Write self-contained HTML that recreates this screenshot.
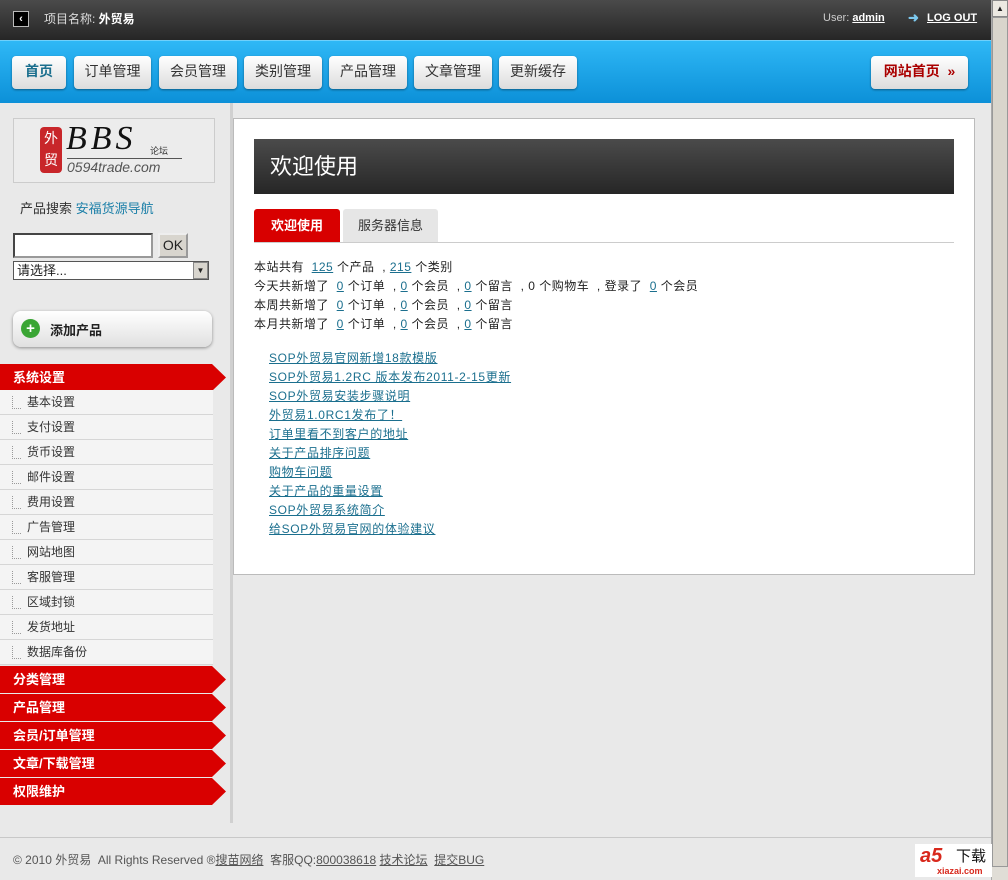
<!DOCTYPE html>
<html><head><meta charset="utf-8"><style>
*{margin:0;padding:0;box-sizing:border-box}
body{width:1008px;height:880px;overflow:hidden;background:#e9e9e9;font-family:"Liberation Sans","Noto Sans CJK SC",sans-serif;font-size:12px;color:#222;position:relative}
.abs{position:absolute}
#top{left:0;top:0;width:992px;height:40px;background:linear-gradient(#4a4a4a,#262626)}
#nav{left:0;top:40px;width:992px;height:63px;background:linear-gradient(#2fb8f6,#0c90d8);border-top:1px solid #6fd0fb}
.btn{position:absolute;top:15px;height:33px;background:linear-gradient(#fff,#dcdcdc);border-radius:4px;box-shadow:0 1px 2px rgba(0,0,0,.4);font-size:14px;line-height:31px;text-align:center;color:#333}
.side-item{position:absolute;left:0;width:213px;height:25px;background:#f4f4f4;border-bottom:1px solid #d6d6d6;line-height:24px;padding-left:27px;font-size:12px;color:#333}
.side-item:before{content:"";position:absolute;left:12px;top:6px;width:8px;height:12px;border-left:1px dotted #999;border-bottom:1px dotted #999}
.red{position:absolute;left:0;width:226px;height:27px;background:#d90000;clip-path:polygon(0 0,212px 0,226px 50%,212px 100%,0 100%);color:#fff;font-weight:bold;font-size:13px;line-height:27px;padding-left:13px}
a{color:#1b6f8e;text-decoration:underline}
.stats{left:254px;top:258px;line-height:19px;font-size:12px;letter-spacing:0.5px;white-space:nowrap}
.links{left:269px;top:349px;line-height:19px;font-size:12px;letter-spacing:0.65px;white-space:nowrap}
.links a{display:block}
</style></head><body>
<div id="top" class="abs">
 <div class="abs" style="left:13px;top:11px;width:16px;height:16px;background:#000;border:1px solid #bbb;color:#fff;font-size:11px;line-height:14px;text-align:center;font-weight:bold">‹</div>
 <div class="abs" style="left:44px;top:10px;color:#ddd;font-size:12px">项目名称: <b style="color:#fff">外贸易</b></div>
 <div class="abs" style="left:823px;top:12px;color:#ccc;font-size:11px">User: <b style="color:#fff;text-decoration:underline">admin</b></div>
 <div class="abs" style="left:908px;top:10px;color:#7cc8ee;font-size:13px;font-weight:bold">➜</div>
 <div class="abs" style="left:927px;top:12px;color:#fff;font-size:11px;font-weight:bold;text-decoration:underline">LOG OUT</div>
</div>
<div id="nav" class="abs">
 <div class="btn" style="left:12px;width:54px;color:#1b6f8e;font-weight:bold">首页</div>
 <div class="btn" style="left:74px;width:77px">订单管理</div>
 <div class="btn" style="left:159px;width:78px">会员管理</div>
 <div class="btn" style="left:244px;width:78px">类别管理</div>
 <div class="btn" style="left:329px;width:78px">产品管理</div>
 <div class="btn" style="left:414px;width:78px">文章管理</div>
 <div class="btn" style="left:499px;width:78px">更新缓存</div>
 <div class="btn" style="left:871px;width:97px;color:#a00;font-weight:bold">网站首页 &nbsp;»</div>
</div>
<div class="abs" style="left:991px;top:0;width:17px;height:880px;background:#e0ddd6;border-left:1px solid #aaa"></div>
<div class="abs" style="left:992px;top:0;width:16px;height:17px;background:#ece9e2;border:1px solid #888;font-size:8px;text-align:center;line-height:15px">▲</div>
<div class="abs" style="left:992px;top:17px;width:16px;height:850px;background:#d9d5cc;border:1px solid #999"></div>
<div class="abs" style="left:13px;top:118px;width:202px;height:65px;background:#ececec;border:1px solid #ccc"></div>
<div class="abs" style="left:40px;top:127px;width:22px;height:46px;background:#c8262a;border-radius:4px;color:#fff;font-size:14px;line-height:22px;text-align:center">外贸</div>
<div class="abs" style="left:66px;top:120px;font-family:'Liberation Serif',serif;font-style:italic;font-size:34px;letter-spacing:4px;color:#111">BBS</div>
<div class="abs" style="left:150px;top:144px;font-size:9px;color:#333">论坛</div>
<div class="abs" style="left:67px;top:158px;font-style:italic;font-size:14px;color:#555;border-top:1px solid #555;width:115px">0594trade.com</div>
<div class="abs" style="left:20px;top:198px;font-size:13px;color:#333">产品搜索 <span style="color:#1b7fa8">安福货源导航</span></div>
<div class="abs" style="left:13px;top:233px;width:140px;height:25px;background:#fff;border:2px inset #999"></div>
<div class="abs" style="left:158px;top:233px;width:30px;height:25px;background:#d8d5ce;border:2px outset #eee;font-size:14px;text-align:center;line-height:21px">OK</div>
<div class="abs" style="left:13px;top:261px;width:196px;height:19px;background:#fff;border:1px solid #555;font-size:13px;line-height:17px;padding-left:3px">请选择...</div>
<div class="abs" style="left:193px;top:262px;width:15px;height:17px;background:#d8d5ce;border:1px solid #888;font-size:8px;text-align:center;line-height:15px">▼</div>
<div class="abs" style="left:13px;top:311px;width:199px;height:36px;background:linear-gradient(#fff,#e0e0e0);border-radius:8px;box-shadow:0 1px 3px rgba(0,0,0,.4)"></div>
<div class="abs" style="left:21px;top:319px;width:19px;height:19px;border-radius:50%;background:#3aa534;color:#fff;font-weight:bold;text-align:center;line-height:19px;font-size:15px">+</div>
<div class="abs" style="left:50px;top:320px;font-weight:bold;font-size:13px">添加产品</div>
<div class="red" style="top:364px">系统设置</div>
<div class="side-item" style="top:390px">基本设置</div>
<div class="side-item" style="top:415px">支付设置</div>
<div class="side-item" style="top:440px">货币设置</div>
<div class="side-item" style="top:465px">邮件设置</div>
<div class="side-item" style="top:490px">费用设置</div>
<div class="side-item" style="top:515px">广告管理</div>
<div class="side-item" style="top:540px">网站地图</div>
<div class="side-item" style="top:565px">客服管理</div>
<div class="side-item" style="top:590px">区域封锁</div>
<div class="side-item" style="top:615px">发货地址</div>
<div class="side-item" style="top:640px">数据库备份</div>
<div class="red" style="top:666px">分类管理</div>
<div class="red" style="top:694px">产品管理</div>
<div class="red" style="top:722px">会员/订单管理</div>
<div class="red" style="top:750px">文章/下载管理</div>
<div class="red" style="top:778px">权限维护</div>
<div class="abs" style="left:230px;top:103px;width:3px;height:720px;background:#d0d0d0"></div>
<div class="abs" style="left:233px;top:118px;width:742px;height:457px;background:#fff;border:1px solid #bbb"></div>
<div class="abs" style="left:254px;top:139px;width:700px;height:55px;background:linear-gradient(#4b4b4b,#262626);color:#fff;font-size:22px;line-height:55px;padding-left:16px">欢迎使用</div>
<div class="abs" style="left:254px;top:209px;width:86px;height:33px;background:#d80000;border-radius:3px 3px 0 0;color:#fff;font-weight:bold;font-size:13px;line-height:33px;text-align:center">欢迎使用</div>
<div class="abs" style="left:343px;top:209px;width:95px;height:33px;background:#e6e6e6;border-radius:3px 3px 0 0;font-size:13px;line-height:33px;text-align:center;color:#333">服务器信息</div>
<div class="abs" style="left:254px;top:242px;width:700px;height:1px;background:#ccc"></div>
<div class="abs stats">
本站共有 &nbsp;<a>125</a> 个产品 &nbsp;, <a>215</a> 个类别<br>
今天共新增了 &nbsp;<a>0</a> 个订单 &nbsp;, <a>0</a> 个会员 &nbsp;, <a>0</a> 个留言 &nbsp;, 0 个购物车 &nbsp;, 登录了 &nbsp;<a>0</a> 个会员<br>
本周共新增了 &nbsp;<a>0</a> 个订单 &nbsp;, <a>0</a> 个会员 &nbsp;, <a>0</a> 个留言<br>
本月共新增了 &nbsp;<a>0</a> 个订单 &nbsp;, <a>0</a> 个会员 &nbsp;, <a>0</a> 个留言
</div>
<div class="abs links">
<a>SOP外贸易官网新增18款模版</a><a>SOP外贸易1.2RC 版本发布2011-2-15更新</a><a>SOP外贸易安装步骤说明</a><a>外贸易1.0RC1发布了！</a><a>订单里看不到客户的地址</a><a>关于产品排序问题</a><a>购物车问题</a><a>关于产品的重量设置</a><a>SOP外贸易系统简介</a><a>给SOP外贸易官网的体验建议</a>
</div>
<div class="abs" style="left:0;top:837px;width:991px;height:1px;background:#c8c8c8"></div>
<div class="abs" style="left:13px;top:851px;font-size:12px;color:#555">© 2010 外贸易 &nbsp;All Rights Reserved ®<u>搜苗网络</u> &nbsp;客服QQ:<u>800038618</u> <u>技术论坛</u> &nbsp;<u>提交BUG</u></div>
<div class="abs" style="left:915px;top:844px;width:77px;height:33px;background:#fff"></div>
<div class="abs" style="left:920px;top:845px;color:#d8281c;font-weight:bold;font-size:20px;font-style:italic;line-height:22px">a5</div>
<div class="abs" style="left:956px;top:848px;font-size:15px;color:#111;line-height:18px">下载</div>
<div class="abs" style="left:937px;top:866px;font-size:9px;color:#d8281c;font-weight:bold">xiazai.com</div>
</body></html>
